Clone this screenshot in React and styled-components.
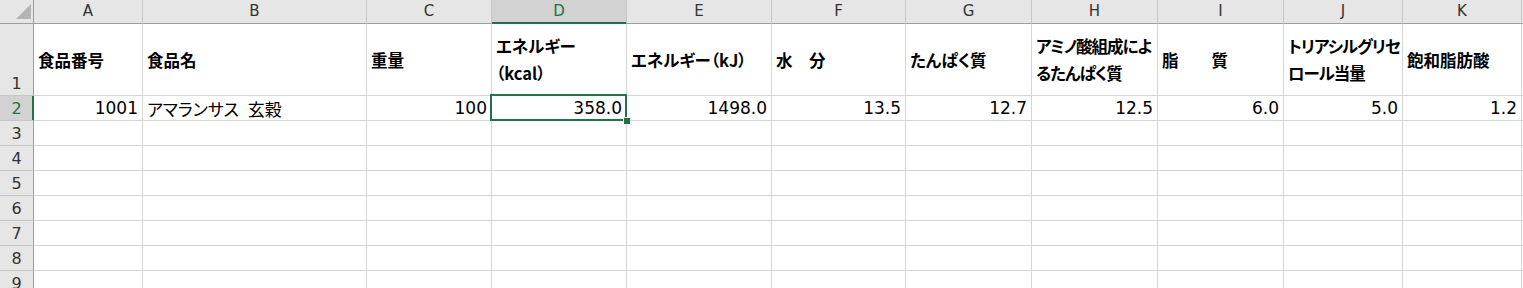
import styled, { createGlobalStyle, css } from "styled-components";

const GREEN = "#217346";
const GRID = "#d4d4d4";
const HEAD_BG = "#e6e6e6";
const HEAD_SEL = "#d2d2d2";
const HEAD_EDGE = "#9e9e9e";
const HEAD_SEP = "#c6c6c6";

const columns = [
  { key: "A", width: 109 },
  { key: "B", width: 224 },
  { key: "C", width: 125 },
  { key: "D", width: 135 },
  { key: "E", width: 145 },
  { key: "F", width: 134 },
  { key: "G", width: 126 },
  { key: "H", width: 126 },
  { key: "I", width: 126 },
  { key: "J", width: 119 },
  { key: "K", width: 119 },
];

const headers = [
  { text: "食品番号" },
  { text: "食品名" },
  { text: "重量" },
  { text: "エネルギー\n（kcal）" },
  { text: "エネルギー（kJ）" },
  { text: "水　分" },
  { text: "たんぱく質" },
  { text: "アミノ酸組成によ\nるたんぱく質", tight: true },
  { text: "脂　　質" },
  { text: "トリアシルグリセ\nロール当量", tight: true },
  { text: "飽和脂肪酸" },
];

const values = [
  { text: "1001", num: true },
  { text: "アマランサス　玄穀" },
  { text: "100", num: true },
  { text: "358.0", num: true },
  { text: "1498.0", num: true },
  { text: "13.5", num: true },
  { text: "12.7", num: true },
  { text: "12.5", num: true },
  { text: "6.0", num: true },
  { text: "5.0", num: true },
  { text: "1.2", num: true },
];

const GlobalStyle = createGlobalStyle`
  html, body {
    margin: 0;
    height: 288px;
    overflow: hidden;
    background: #fff;
  }
  body {
    font-family: "Noto Sans CJK JP", sans-serif;
    font-feature-settings: "palt";
    color: #000;
  }
`;

const Sheet = styled.div`
  display: grid;
  grid-template-columns: 34px ${columns.map((c) => `${c.width}px`).join(" ")} 1fr;
  grid-template-rows: 24px 72px repeat(8, 25px);
  width: 1523px;
`;

const Corner = styled.div`
  background: ${HEAD_BG};
  border-right: 1px solid ${HEAD_EDGE};
  border-bottom: 1px solid ${HEAD_EDGE};
  box-sizing: border-box;
  display: flex;
  align-items: flex-end;
  justify-content: flex-end;
  padding: 0 2px 4px 0;

  svg {
    display: block;
  }
`;

const ColHeader = styled.div`
  box-sizing: border-box;
  background: ${HEAD_BG};
  border-right: 1px solid ${HEAD_SEP};
  border-bottom: 1px solid ${HEAD_EDGE};
  display: flex;
  align-items: center;
  justify-content: center;
  font-family: "DejaVu Sans", sans-serif;
  font-size: 15px;
  color: #333;
  padding-bottom: 1px;

  ${(p) =>
    p.$selected &&
    css`
      background: ${HEAD_SEL};
      color: ${GREEN};
      border-bottom-color: ${GREEN};
      box-shadow: inset 0 -1px 0 ${GREEN};
    `}
`;

const RowHeader = styled.div`
  box-sizing: border-box;
  background: ${HEAD_BG};
  border-right: 1px solid ${HEAD_EDGE};
  border-bottom: 1px solid ${HEAD_SEP};
  display: flex;
  align-items: flex-end;
  justify-content: center;
  font-family: "DejaVu Sans", sans-serif;
  font-size: 16px;
  line-height: 18px;
  color: #333;
  padding-bottom: 2px;

  ${(p) =>
    p.$selected &&
    css`
      background: ${HEAD_SEL};
      color: ${GREEN};
      border-right-color: ${GREEN};
      box-shadow: inset -1px 0 0 ${GREEN};
    `}
`;

const Cell = styled.div`
  position: relative;
  box-sizing: border-box;
  border-right: 1px solid ${GRID};
  border-bottom: 1px solid ${GRID};
  padding: 0 4px;
  display: flex;
  align-items: center;
  justify-content: ${(p) => (p.$num ? "flex-end" : "flex-start")};
  font-size: 17px;
  white-space: nowrap;
  ${(p) =>
    p.$num &&
    css`
      font-family: "DejaVu Sans", "Noto Sans CJK JP", sans-serif;
      font-size: 17px;
      padding-right: 4px;
    `}

  ${(p) =>
    p.$active &&
    css`
      &::after {
        content: "";
        position: absolute;
        left: -2px;
        top: -2px;
        right: -1px;
        bottom: -1px;
        border: 2px solid ${GREEN};
        pointer-events: none;
        z-index: 2;
      }
    `}
`;

const HeadText = styled.div`
  font-weight: 700;
  font-size: 16.5px;
  line-height: 27px;
  white-space: pre;
  padding-top: 1px;
  letter-spacing: ${(p) => (p.$tight ? "-1px" : "0")};
`;

const NarrowSpace = styled.span`
  letter-spacing: -8px;
`;

const FillHandle = styled.span`
  position: absolute;
  right: -4px;
  bottom: -4px;
  width: 6px;
  height: 6px;
  background: ${GREEN};
  border-left: 1px solid #fff;
  border-top: 1px solid #fff;
  z-index: 3;
`;

const CornerTriangle = () => (
  <svg width="15" height="15" viewBox="0 0 15 15">
    <polygon points="15,0 15,15 0,15" fill="#b4b4b4" />
  </svg>
);

function renderValue(text) {
  if (!text.includes("　")) return text;
  const [a, b] = text.split("　");
  return (
    <>
      {a}
      <NarrowSpace>　</NarrowSpace>
      {b}
    </>
  );
}

export default function App() {
  const rows = [3, 4, 5, 6, 7, 8, 9];
  return (
    <>
      <GlobalStyle />
      <Sheet>
        <Corner>
          <CornerTriangle />
        </Corner>
        {columns.map((c) => (
          <ColHeader key={c.key} $selected={c.key === "D"}>
            {c.key}
          </ColHeader>
        ))}
        <ColHeader />

        <RowHeader>1</RowHeader>
        {headers.map((h, i) => (
          <Cell key={i}>
            <HeadText $tight={h.tight}>{h.text}</HeadText>
          </Cell>
        ))}
        <Cell />

        <RowHeader $selected>2</RowHeader>
        {values.map((v, i) => (
          <Cell key={i} $num={v.num} $active={i === 3}>
            {renderValue(v.text)}
            {i === 3 && <FillHandle />}
          </Cell>
        ))}
        <Cell />

        {rows.map((r) => (
          <Row key={r} n={r} />
        ))}
      </Sheet>
    </>
  );
}

function Row({ n }) {
  return (
    <>
      <RowHeader>{n}</RowHeader>
      {columns.map((c) => (
        <Cell key={c.key} />
      ))}
      <Cell />
    </>
  );
}
